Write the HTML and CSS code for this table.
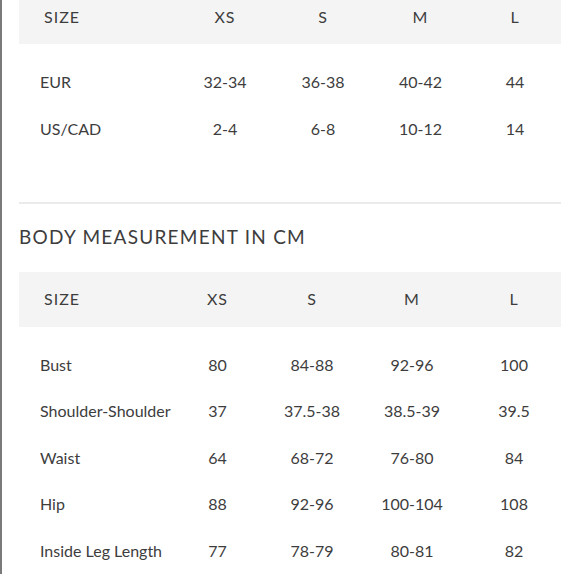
FILE: index.html
```html
<!DOCTYPE html>
<html lang="en">
<head>
<meta charset="utf-8">
<title>Size guide</title>
<link rel="stylesheet" href="styles.css">
</head>
<body>
<div class="page">
  <section class="size-table t1">
    <div class="row head"><span class="label">SIZE</span><span>XS</span><span>S</span><span>M</span><span>L</span></div>
    <div class="body">
      <div class="row"><span class="label">EUR</span><span>32-34</span><span>36-38</span><span>40-42</span><span>44</span></div>
      <div class="row"><span class="label">US/CAD</span><span>2-4</span><span>6-8</span><span>10-12</span><span>14</span></div>
    </div>
  </section>
  <hr class="divider">
  <h2 class="title">BODY MEASUREMENT IN CM</h2>
  <section class="size-table t2">
    <div class="row head"><span class="label">SIZE</span><span>XS</span><span>S</span><span>M</span><span>L</span></div>
    <div class="body">
      <div class="row"><span class="label">Bust</span><span>80</span><span>84-88</span><span>92-96</span><span>100</span></div>
      <div class="row"><span class="label">Shoulder-Shoulder</span><span>37</span><span>37.5-38</span><span>38.5-39</span><span>39.5</span></div>
      <div class="row"><span class="label">Waist</span><span>64</span><span>68-72</span><span>76-80</span><span>84</span></div>
      <div class="row"><span class="label">Hip</span><span>88</span><span>92-96</span><span>100-104</span><span>108</span></div>
      <div class="row"><span class="label">Inside Leg Length</span><span>77</span><span>78-79</span><span>80-81</span><span>82</span></div>
    </div>
  </section>
</div>
</body>
</html>
```
FILE: styles.css
```css
html, body {
  margin: 0;
  padding: 0;
  background: #ffffff;
}

body {
  font-family: Lato, "Open Sans", sans-serif;
  color: #3d3d3d;
  overflow: hidden;
}

.page {
  border-left: 2px solid #7a7a7a;
  min-height: 100vh;
  padding-left: 17px;
  box-sizing: border-box;
}

.size-table {
  width: 542px;
}

.t1 {
  margin-top: -11px;
}

.row {
  display: grid;
  align-items: center;
  height: 46.4px;
  font-size: 16px;
  line-height: 20px;
}

.t1 .row {
  grid-template-columns: 157px 98px 98px 97px 92px;
}

.t2 .row {
  grid-template-columns: 149px 99px 90px 110px 94px;
}

.row span {
  text-align: center;
  white-space: nowrap;
}

.row .label {
  text-align: left;
  padding-left: 21px;
}

.row.head {
  height: 55px;
  background: #f4f4f4;
  letter-spacing: 1px;
}

.row.head .label {
  padding-left: 25px;
}

.body {
  padding-top: 15px;
}

.divider {
  width: 542px;
  margin: 50px 0 0 0;
  border: 0;
  height: 2px;
  background: #ebebeb;
}

.title {
  margin: 21px 0 23px 0;
  font-size: 19px;
  line-height: 24px;
  font-weight: 400;
  letter-spacing: 1.25px;
  color: #3d3d3d;
}
```
